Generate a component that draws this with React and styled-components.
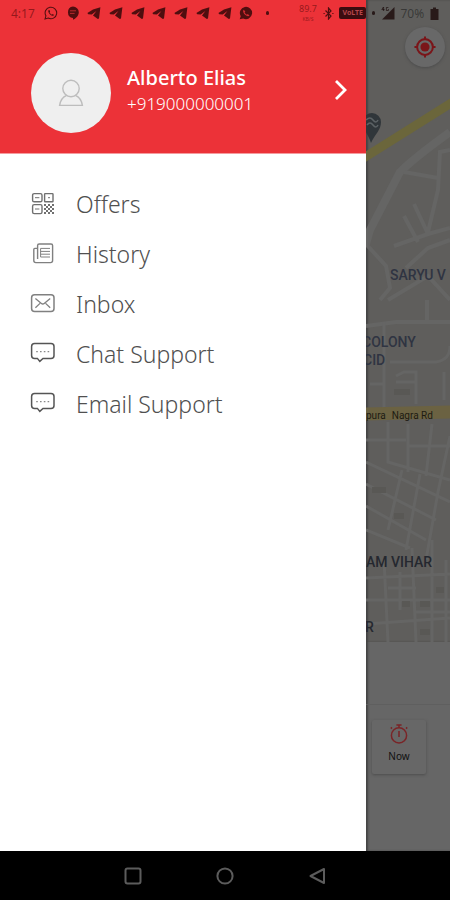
import React from "react";
import styled, { createGlobalStyle } from "styled-components";

const GlobalStyle = createGlobalStyle`
* {
    box-sizing: border-box;
}
body {
    margin: 0;
    background: #000;
    font-family: "Noto Sans", "Open Sans", sans-serif;
}
button {
    border: none;
    padding: 0;
    background: none;
    font-family: inherit;
    cursor: pointer;
}
svg {
    display: block;
}
`;

const TelegramIcon = () => (
    <svg width="14" height="14" viewBox="0 0 14 14" fill="currentColor">
        <path d="M13.4 1.2 L6 3.4 L0.4 7 L1.2 8.2 L4.8 8.4 L9.4 5 L6 9.6 L10.8 13 L12 12.4 Z" />
    </svg>
);

const WhatsappIcon = () => (
    <svg width="16" height="16" viewBox="0 0 16 16" fill="none" stroke="currentColor" strokeWidth="1.2">
        <path d="M1.2 14.8 L2.2 11.3 A6.6 6.6 0 1 1 4.8 13.8 Z" />
        <path d="M5.4 4.6 C4 6 5.6 8.4 7 9.6 C8.6 11 10.6 11.8 11.6 10.4 L9.9 9.2 L9 10 C7.8 9.4 7 8.6 6.4 7.4 L7 6.4 L6.2 4.6 Z" fill="currentColor" stroke="none" />
    </svg>
);

const HangoutsIcon = () => (
    <svg width="14" height="14" viewBox="0 0 14 14">
        <path d="M7 0.5 A5.8 5.8 0 0 1 12.8 6.2 C12.8 9.8 9.6 12.6 7 13.8 L7 12 A5.8 5.8 0 0 1 7 0.5 Z" fill="currentColor" />
        <path d="M4 4.8 H10 M4 7.4 H8.6" stroke="#b8282d" strokeWidth="1" />
    </svg>
);

const PhoneCircleIcon = () => (
    <svg width="16" height="16" viewBox="0 0 16 16">
        <path d="M0.8 15 L2 11.6 A7 7 0 1 1 4.8 14.2 Z" fill="currentColor" />
        <path d="M5.4 4.2 C3.8 5.8 5.4 8.6 7 10 C8.6 11.4 10.8 12.4 12 10.8 L10 9.2 L9 10 C7.8 9.4 7 8.6 6.4 7.4 L7.2 6.4 Z" fill="#d22c32" />
    </svg>
);

const BluetoothIcon = () => (
    <svg width="11" height="13" viewBox="0 0 11 13" fill="none" stroke="currentColor" strokeWidth="1.2">
        <path d="M2.5 3.5 L8 9 L5.5 12 V1 L8 4 L2.5 9.5" />
        <path d="M0.5 6.5 H1.7 M9.3 6.5 H10.5" />
    </svg>
);

const SignalIcon = () => (
    <svg width="14" height="14" viewBox="0 0 14 14" fill="currentColor">
        <path d="M13.5 1 V13.5 H1 Z" />
        <path d="M2.4 1 L0.8 3.6 H3.6 M2.6 1 V5 M7.4 1.5 H5.4 V4.5 H7.4 V3" fill="none" stroke="currentColor" strokeWidth="0.8" />
    </svg>
);

const BatteryIcon = () => (
    <svg width="9" height="13" viewBox="0 0 9 13" fill="currentColor">
        <path d="M3 0.5 H6 V2 H8.5 V13 H0.5 V2 H3 Z" />
    </svg>
);

const UserIcon = () => (
    <svg width="26" height="28" viewBox="0 0 26 28" fill="none" stroke="#bdbdbd" strokeWidth="1.4">
        <circle cx="13" cy="9.5" r="8.2" />
        <path d="M8.6 16.4 C4.6 18 2.4 21.4 1.6 26.4 H24.4 C23.6 21.4 21.4 18 17.4 16.4" />
    </svg>
);

const ChevronIcon = () => (
    <svg width="14" height="22" viewBox="0 0 14 22" fill="none" stroke="#fff" strokeWidth="2.8">
        <path d="M2 2 L11 11 L2 20" />
    </svg>
);

const OffersIcon = () => (
    <svg width="26" height="24" viewBox="0 0 26 24" fill="none" stroke="#707070" strokeWidth="1.4">
        <rect x="2.6" y="1.6" width="9.4" height="8.2" rx="1.6" />
        <rect x="14.6" y="1.6" width="8.4" height="8.2" rx="0.6" />
        <rect x="2.6" y="12.6" width="9.4" height="9" rx="1.6" />
        <path d="M5 5.7 H9.4 M5 17 H9.4 M18 5.7 H20" strokeWidth="1" />
        <path d="M14 13 H16 M18 13 H20 M22 13 H24 M16 15 H18 M20 15 H22 M14 17 H16 M18 17 H20 M22 17 H24 M16 19 H18 M20 19 H22 M14 21 H16 M18 21 H20 M22 21 H24" strokeWidth="2" />
    </svg>
);

const HistoryIcon = () => (
    <svg width="26" height="24" viewBox="0 0 26 24" fill="none" stroke="#808080" strokeWidth="1.4">
        <path d="M7.6 17 V3.6 Q7.6 2 9.2 2 H21 Q22.6 2 22.6 3.6 V18.6 Q22.6 20.6 20.6 20.6 H5.8 Q3.8 20.6 3.8 18.6 V7.4 Q3.8 6.4 4.8 6.4 H7.6" />
        <path d="M10.6 6.4 H20 M10.6 9.4 H20 M10.6 12.2 H20 M10.6 15 H20 M10.6 6.4 V15" strokeWidth="1" />
    </svg>
);

const InboxIcon = () => (
    <svg width="26" height="24" viewBox="0 0 26 24" fill="none" stroke="#808080" strokeWidth="1.5">
        <rect x="1.6" y="2.8" width="22.4" height="16.6" rx="3" />
        <path d="M5.4 6.4 L11.4 11.4 Q12.8 12.6 14.2 11.4 L20.2 6.4 M5.4 15.8 L10 11.4 M20.2 15.8 L15.6 11.4" strokeWidth="1.3" />
    </svg>
);

const ChatIcon = () => (
    <svg width="26" height="24" viewBox="0 0 26 24" fill="none" stroke="#555" strokeWidth="1.5">
        <path d="M4.6 1.6 H21 Q24 1.6 24 4.6 V13.4 Q24 16.4 21 16.4 H13 L9.8 19.4 L7.4 16.4 H4.6 Q1.6 16.4 1.6 13.4 V4.6 Q1.6 1.6 4.6 1.6 Z" />
        <path d="M6.2 9.6 H20" strokeDasharray="1.6 2.2" stroke="#888" strokeWidth="1.3" />
    </svg>
);

const TargetIcon = () => (
    <svg width="22" height="22" viewBox="0 0 24 24" fill="none" stroke="#7a1519" strokeWidth="2.2">
        <circle cx="12" cy="12" r="8.6" />
        <circle cx="12" cy="12" r="5" fill="#7a1519" stroke="none" />
        <path d="M12 0.5 V4 M12 20 V23.5 M0.5 12 H4 M20 12 H23.5" />
    </svg>
);

const StopwatchIcon = () => (
    <svg width="20" height="22" viewBox="0 0 20 22" fill="none" stroke="#7a2427" strokeWidth="1.5">
        <circle cx="10" cy="12.4" r="7.6" />
        <path d="M10 4.6 V2 M7.4 2 H12.6 M10 8 V14 M3 5.6 L1.8 4.4 M17 5.6 L18.2 4.4" />
    </svg>
);

const MapDrawing = () => (
    <Streets viewBox="0 0 84 642" preserveAspectRatio="xMinYMin slice" fill="none">
        <g stroke="#656564" strokeWidth="4">
            <path d="M84 132 Q48 158 34 172 L4 230 L0 244" strokeWidth="8" />
            <path d="M38 172 L72 178 M84 150 L74 152 L72 190 L62 232 M38 216 L52 242 M48 204 L62 234 M28 246 L62 234 L84 228 M0 244 L20 266 L24 288 L14 300 M84 240 L62 248 L40 268 M22 300 L62 276 L84 300 M0 326 L30 322 H84 M61 300 V324" />
            <path d="M18 322 V410 M24 362 H70 Q84 360 84 346 M30 382 H50 V404 M4 384 H18 M30 376 L38 372 H50 V402 M78 372 V400" strokeWidth="3" />
            <path d="M22 422 V462 L84 480 M42 424 V472 M66 424 L60 476 M0 440 H40 M42 446 H84 M0 462 L84 502 M0 484 L70 520 M0 506 L60 540 M0 530 L44 548 M84 436 L72 492 L60 560 M36 470 L22 530 M54 474 L40 550" strokeWidth="3" />
            <path d="M0 578 L84 574 M0 600 H84 M0 624 L84 618 M18 560 L22 642 M34 572 V610 M46 548 L50 642 M66 540 V642 M80 560 V642 M22 588 H50 M50 612 H84" strokeWidth="3" />
        </g>
        <g stroke="#595855" strokeWidth="6">
            <path d="M28 392 H44 M54 604 H64 M54 632 H64 M36 604 H44 M6 490 H20 M28 516 H38 M70 590 H78" />
        </g>
        <path d="M-4 159 L90 100" stroke="#6b663b" strokeWidth="9" />
        <path d="M-2 414 L86 412" stroke="#6b6242" strokeWidth="13" />
        <path d="M6 113 A9 9 0 0 1 15 122 C15 130 9 134 5 143 C2 134 -3 130 -3 122 A9 9 0 0 1 6 113 Z" fill="#30363a" />
        <path d="M0 120 Q4 116 7 120 T12 120 M1 125 Q4 121 7 125 T12 125" stroke="#5c6265" strokeWidth="1.6" />
    </Streets>
);

const menuItems = [
    { label: "Offers", Icon: OffersIcon },
    { label: "History", Icon: HistoryIcon },
    { label: "Inbox", Icon: InboxIcon },
    { label: "Chat Support", Icon: ChatIcon },
    { label: "Email Support", Icon: ChatIcon },
];

const places = [
    { name: "SARYU V", left: 24, top: 267 },
    { name: "COLONY", left: -4, top: 334 },
    { name: "CID", left: -3, top: 352 },
    { name: "AM VIHAR", left: 0, top: 554, dark: true },
    { name: "R", left: -1, top: 619, dark: true },
];

const App = () => {
    return (
        <Screen>
            <GlobalStyle />
            <Main>
                <Drawer>
                    <Profile>
                        <Avatar><UserIcon /></Avatar>
                        <ProfileText>
                            <UserName>Alberto Elias</UserName>
                            <Phone>+919000000001</Phone>
                        </ProfileText>
                        <ProfileButton type="button" aria-label="Open profile">
                            <ChevronIcon />
                        </ProfileButton>
                    </Profile>
                    <Menu>
                        {menuItems.map(({ label, Icon }) => (
                            <MenuItem key={label} href="#">
                                <Icon />
                                {label}
                            </MenuItem>
                        ))}
                    </Menu>
                </Drawer>
                <Behind>
                    <MapArea>
                        <MapDrawing />
                        {places.map((p) => (
                            <Place key={p.name} $left={p.left} $top={p.top} $dark={p.dark}>{p.name}</Place>
                        ))}
                        <RoadName>
                            <span>pura</span>
                            <span>Nagra Rd</span>
                        </RoadName>
                        <LocateButton type="button" aria-label="My location">
                            <TargetIcon />
                        </LocateButton>
                    </MapArea>
                    <Sheet>
                        <NowButton type="button">
                            <StopwatchIcon />
                            Now
                        </NowButton>
                    </Sheet>
                </Behind>
            </Main>
            <StatusBar>
                <Clock>4:17</Clock>
                <Notifications>
                    <Slot><WhatsappIcon /></Slot>
                    <Slot><HangoutsIcon /></Slot>
                    {[...Array(7)].map((_, i) => (
                        <Slot key={i}><TelegramIcon /></Slot>
                    ))}
                    <Slot><PhoneCircleIcon /></Slot>
                    <Slot><Dot /></Slot>
                </Notifications>
                <System>
                    <Speed>
                        <span>89.7</span>
                        <small>KB/S</small>
                    </Speed>
                    <BluetoothIcon />
                    <Volte>VoLTE</Volte>
                    <Dot />
                    <SignalIcon />
                    <Percent>70%</Percent>
                    <BatteryIcon />
                </System>
            </StatusBar>
            <NavBar>
                <button type="button" aria-label="Recent apps">
                    <svg width="20" height="20" viewBox="0 0 20 20" fill="none" stroke="#5c5c5c" strokeWidth="2">
                        <rect x="2.5" y="2.5" width="15" height="15" rx="2" />
                    </svg>
                </button>
                <button type="button" aria-label="Home">
                    <svg width="20" height="20" viewBox="0 0 20 20" fill="none" stroke="#5c5c5c" strokeWidth="2">
                        <circle cx="10" cy="10" r="7.6" />
                    </svg>
                </button>
                <button type="button" aria-label="Back">
                    <svg width="20" height="20" viewBox="0 0 20 20" fill="none" stroke="#5c5c5c" strokeWidth="2" strokeLinejoin="round">
                        <path d="M17 3 V17 L3.5 10 Z" />
                    </svg>
                </button>
            </NavBar>
        </Screen>
    );
};

export default App;

const Screen = styled.div`
position: relative;
display: flex;
flex-direction: column;
min-height: 100vh;
overflow: hidden;
`;

const Main = styled.main`
flex: 1;
display: flex;
`;

const StatusBar = styled.div`
position: absolute;
top: 0;
left: 0;
right: 0;
height: 26px;
padding: 0 11px;
display: flex;
align-items: center;
color: rgba(20, 0, 0, 0.72);
`;

const Clock = styled.span`
width: 33px;
font-size: 12px;
color: rgba(60, 0, 0, 0.5);
`;

const Notifications = styled.div`
flex: 0 0 231px;
display: flex;
justify-content: space-between;
`;

const Slot = styled.span`
width: 14px;
height: 16px;
display: flex;
align-items: center;
justify-content: center;
`;

const Dot = styled.span`
width: 3px;
height: 4px;
border-radius: 2px;
background: currentColor;
`;

const System = styled.div`
flex: 1;
padding-left: 24px;
display: flex;
align-items: center;
justify-content: space-between;
`;

const Speed = styled.span`
display: flex;
flex-direction: column;
align-items: center;
color: rgba(60, 0, 0, 0.5);
span {
    font-size: 9px;
    line-height: 12px;
}
small {
    font-size: 5px;
    line-height: 8px;
}
`;

const Volte = styled.span`
padding: 0 3px;
border-radius: 2px;
background: #3b0c0f;
color: #b5474b;
font-size: 7px;
font-weight: 700;
line-height: 12px;
`;

const Percent = styled.span`
font-size: 12px;
color: rgba(30, 30, 30, 0.6);
`;

const Drawer = styled.aside`
flex: 1;
background: #fff;
`;

const Profile = styled.header`
display: flex;
align-items: center;
padding: 53px 18px 20px 31px;
background: #ec3238;
border-bottom: 1px solid #f59b9e;
`;

const Avatar = styled.div`
flex: 0 0 80px;
height: 80px;
border-radius: 50%;
background: #efefef;
display: flex;
align-items: center;
justify-content: center;
`;

const ProfileText = styled.div`
flex: 1;
padding: 0 0 6px 16px;
color: #fff;
`;

const UserName = styled.div`
font-size: 20px;
font-weight: 500;
line-height: 28px;
`;

const Phone = styled.div`
font-size: 17px;
font-weight: 300;
line-height: 24px;
`;

const ProfileButton = styled.button`
padding-bottom: 6px;
`;

const Menu = styled.nav`
padding-top: 25px;
display: flex;
flex-direction: column;
`;

const MenuItem = styled.a`
height: 50px;
padding-left: 30px;
display: flex;
align-items: center;
gap: 20px;
color: #505050;
font-size: 23px;
font-weight: 300;
text-decoration: none;
`;

const Behind = styled.div`
position: relative;
flex: 0 0 84px;
display: flex;
flex-direction: column;
background: #666;
box-shadow: inset 2px 0 2px #444;
`;

const MapArea = styled.section`
position: relative;
flex: 1;
overflow: hidden;
background: #5f5e5c;
box-shadow: inset 2px 0 2px #444;
`;

const Streets = styled.svg`
width: 100%;
height: 100%;
`;

const Place = styled.span`
position: absolute;
left: ${(props) => props.$left}px;
top: ${(props) => props.$top}px;
font-family: Roboto, sans-serif;
font-size: 14px;
font-weight: 500;
line-height: 16px;
white-space: nowrap;
color: ${(props) => (props.$dark ? "#25282f" : "#2f3442")};
`;

const RoadName = styled.span`
position: absolute;
left: 0;
top: 410px;
display: flex;
gap: 6px;
font-family: Roboto, sans-serif;
font-size: 10px;
line-height: 12px;
white-space: nowrap;
color: #1d1b12;
`;

const LocateButton = styled.button`
position: absolute;
top: 27px;
right: 5px;
width: 40px;
height: 40px;
border-radius: 50%;
background: #686868;
box-shadow: 0 1px 3px #4c4c4c;
display: flex;
align-items: center;
justify-content: center;
`;

const Sheet = styled.section`
height: 209px;
padding: 62px 0 0;
background: linear-gradient(#5f5f5f, #5f5f5f) 0 62px / 100% 1px no-repeat;
`;

const NowButton = styled.button`
width: 54px;
height: 54px;
margin: 16px 0 0 6px;
padding-bottom: 8px;
border-radius: 2px;
background: #676767;
box-shadow: 0 1px 3px #4c4c4c;
display: flex;
flex-direction: column;
align-items: center;
justify-content: center;
gap: 4px;
color: #111;
font-size: 10px;
line-height: 14px;
`;

const NavBar = styled.footer`
height: 49px;
display: flex;
align-items: center;
justify-content: center;
gap: 72px;
background: #000;
`;
